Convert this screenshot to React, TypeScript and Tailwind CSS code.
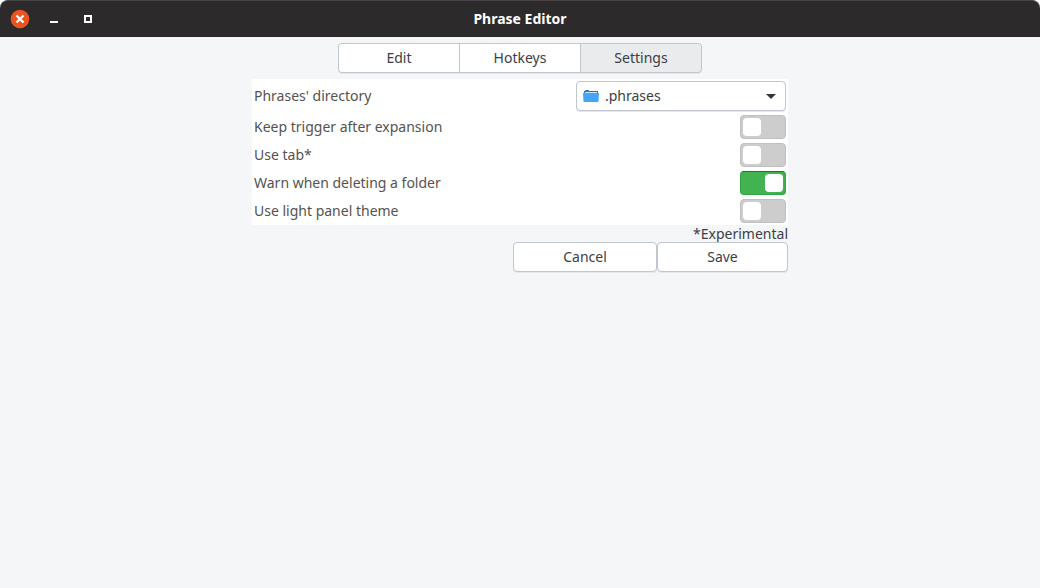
import { useState } from "react";
import clsx from "clsx";

const tabs = ["Edit", "Hotkeys", "Settings"];

const options = [
  { id: "keep-trigger", label: "Keep trigger after expansion", on: false },
  { id: "use-tab", label: "Use tab*", on: false },
  { id: "warn-delete", label: "Warn when deleting a folder", on: true },
  { id: "light-panel", label: "Use light panel theme", on: false },
];

function TitleBar() {
  return (
    <div className="bg-white">
      <header className="grid h-[37px] grid-cols-[1fr_auto_1fr] items-center rounded-t-lg border-t border-[#454343] bg-[#2c2a2b] text-white">
        <div className="flex items-center pl-[10px]">
          <button type="button" aria-label="Close" className="mr-[14px]">
            <svg width="20" height="20" viewBox="0 0 20 20" className="block">
              <circle cx="10" cy="10" r="9.3" fill="#e95420" />
              <path d="M6.5 6.5l7 7M13.5 6.5l-7 7" stroke="#fff" strokeWidth="2.2" />
            </svg>
          </button>
          <button type="button" aria-label="Minimize" className="mr-[14px]">
            <svg width="20" height="20" viewBox="0 0 20 20" className="block">
              <path d="M6 12h8v2H6z" fill="#fff" />
            </svg>
          </button>
          <button type="button" aria-label="Maximize">
            <svg width="20" height="20" viewBox="0 0 20 20" className="block">
              <path d="M6 6h8v8H6zM8 8v4h4V8z" fill="#fff" fillRule="evenodd" />
            </svg>
          </button>
        </div>
        <h1 className="text-sm leading-5 font-bold">Phrase Editor</h1>
      </header>
    </div>
  );
}

function DirectorySelect() {
  return (
    <div className="relative w-[210px]">
      <select
        id="directory"
        defaultValue=".phrases"
        className="block h-[30px] w-full appearance-none rounded-[4px] border border-[#c0c5ce] bg-white pr-8 pb-[2px] pl-7 text-[#3b3e45] shadow-[0_1px_0_#e6e8ec]"
      >
        <option>.phrases</option>
      </select>
      <svg
        width="16"
        height="12"
        viewBox="0 0 16 12"
        className="pointer-events-none absolute top-[9px] left-[7px]"
      >
        <path d="M1 4V1h1l.5-1h3l.5 1h9v3z" fill="#1976d2" />
        <path d="M2 2h12v1H2z" fill="#d9e6f0" />
        <path d="M0 3h16l-.5 8.500q0 .5-.5.5H1q-.5 0-.5-.5z" fill="#42a5f5" />
      </svg>
      <svg
        width="10"
        height="5"
        viewBox="0 0 10 5"
        className="pointer-events-none absolute top-[13px] right-[10px]"
      >
        <path d="M0 0h10L5 5z" fill="#33363b" />
      </svg>
    </div>
  );
}

function Toggle({ id, initial }: { id: string; initial: boolean }) {
  const [on, setOn] = useState(initial);
  return (
    <input
      id={id}
      type="checkbox"
      role="switch"
      checked={on}
      onChange={() => setOn(!on)}
      className={clsx(
        "flex h-6 w-[46px] appearance-none items-center rounded-[4px] border px-[2px] before:size-[18px] before:rounded-[4px] before:bg-white",
        on
          ? "justify-end border-[#35a044] border-t-[#23702f] bg-[#41b350]"
          : "justify-start border-[#bfbfbf] bg-[#cdcdcd]",
      )}
    />
  );
}

export default function App() {
  const [active, setActive] = useState("Settings");
  return (
    <div className="flex min-h-screen flex-col bg-[#f4f6f8] font-['Noto_Sans',sans-serif] text-sm leading-[17px] text-[#3b3e45]">
      <TitleBar />
      <main className="flex flex-col items-center gap-[6px] pt-[6px]">
        <nav className="grid w-[364px] grid-cols-3 gap-px overflow-hidden rounded-[4px] border border-[#c0c5ce] bg-[#c0c5ce] shadow-[0_1px_0_#e6e8ec]">
          {tabs.map((tab) => (
            <button
              key={tab}
              type="button"
              aria-pressed={tab === active}
              onClick={() => setActive(tab)}
              className={clsx("h-7 pb-[2px]", tab === active ? "bg-[#eaebed]" : "bg-white")}
            >
              {tab}
            </button>
          ))}
        </nav>
        <form className="w-full max-w-[536px]" onSubmit={(e) => e.preventDefault()}>
          <div className="bg-white text-[#54534f]">
            <div className="flex items-center justify-between p-[2px]">
              <label htmlFor="directory" className="pb-[2px]">
                Phrases' directory
              </label>
              <DirectorySelect />
            </div>
            {options.map((o) => (
              <div key={o.id} className="flex items-center justify-between p-[2px]">
                <label htmlFor={o.id} className="pb-[2px]">
                  {o.label}
                </label>
                <Toggle id={o.id} initial={o.on} />
              </div>
            ))}
          </div>
          <p className="text-right">*Experimental</p>
          <div className="flex justify-end">
            <button
              type="button"
              className="h-[30px] w-36 rounded-[4px] border border-[#c0c5ce] bg-white pb-[2px] shadow-[0_1px_0_#e6e8ec]"
            >
              Cancel
            </button>
            <button
              type="submit"
              className="h-[30px] w-[131px] rounded-[4px] border border-[#c0c5ce] bg-white pb-[2px] shadow-[0_1px_0_#e6e8ec]"
            >
              Save
            </button>
          </div>
        </form>
      </main>
    </div>
  );
}
